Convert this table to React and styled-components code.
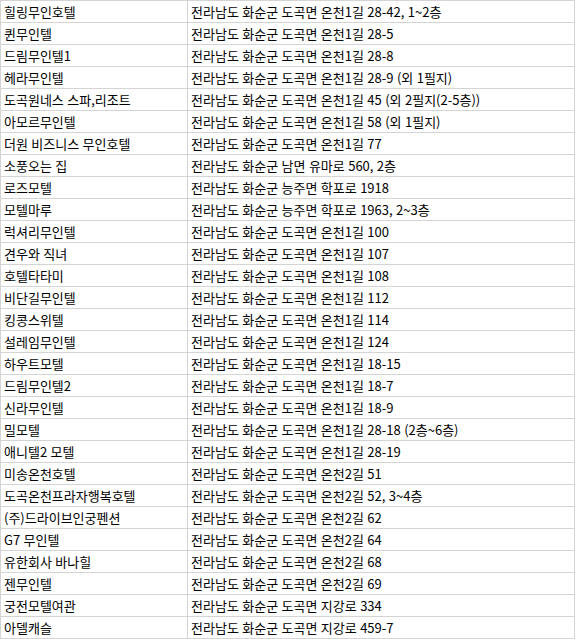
import React from "react";
import styled, { createGlobalStyle } from "styled-components";

const Global = createGlobalStyle`
  html, body { margin: 0; padding: 0; background: #fff; }
  body { font-family: "Malgun Gothic", "Noto Sans CJK KR", "Noto Sans", sans-serif; }
`;

const Table = styled.table`
  border-collapse: collapse;
  width: 575px;
  table-layout: fixed;
  font-size: 13px;
  color: #000;
`;

const Row = styled.tr`
  height: 22px;
`;

const Cell = styled.td`
  border: 1px solid #d4d4d4;
  padding: 0 0 0 3px;
  height: 21px;
  line-height: 20px;
  white-space: nowrap;
  overflow: hidden;
  vertical-align: middle;
  word-spacing: 0.5px;
  width: ${(p) => (p.$first ? "183px" : "auto")};
`;

const rows = [
  ["힐링무인호텔", "전라남도 화순군 도곡면 온천1길 28-42, 1~2층"],
  ["퀸무인텔", "전라남도 화순군 도곡면 온천1길 28-5"],
  ["드림무인텔1", "전라남도 화순군 도곡면 온천1길 28-8"],
  ["헤라무인텔", "전라남도 화순군 도곡면 온천1길 28-9 (외 1필지)"],
  ["도곡원네스 스파,리조트", "전라남도 화순군 도곡면 온천1길 45 (외 2필지(2-5층))"],
  ["아모르무인텔", "전라남도 화순군 도곡면 온천1길 58 (외 1필지)"],
  ["더원 비즈니스 무인호텔", "전라남도 화순군 도곡면 온천1길 77"],
  ["소풍오는 집", "전라남도 화순군 남면 유마로 560, 2층"],
  ["로즈모텔", "전라남도 화순군 능주면 학포로 1918"],
  ["모텔마루", "전라남도 화순군 능주면 학포로 1963, 2~3층"],
  ["럭셔리무인텔", "전라남도 화순군 도곡면 온천1길 100"],
  ["견우와 직녀", "전라남도 화순군 도곡면 온천1길 107"],
  ["호텔타타미", "전라남도 화순군 도곡면 온천1길 108"],
  ["비단길무인텔", "전라남도 화순군 도곡면 온천1길 112"],
  ["킹콩스위텔", "전라남도 화순군 도곡면 온천1길 114"],
  ["설레임무인텔", "전라남도 화순군 도곡면 온천1길 124"],
  ["하우트모텔", "전라남도 화순군 도곡면 온천1길 18-15"],
  ["드림무인텔2", "전라남도 화순군 도곡면 온천1길 18-7"],
  ["신라무인텔", "전라남도 화순군 도곡면 온천1길 18-9"],
  ["밀모텔", "전라남도 화순군 도곡면 온천1길 28-18 (2층~6층)"],
  ["애니텔2 모텔", "전라남도 화순군 도곡면 온천1길 28-19"],
  ["미송온천호텔", "전라남도 화순군 도곡면 온천2길 51"],
  ["도곡온천프라자행복호텔", "전라남도 화순군 도곡면 온천2길 52, 3~4층"],
  ["(주)드라이브인궁펜션", "전라남도 화순군 도곡면 온천2길 62"],
  ["G7 무인텔", "전라남도 화순군 도곡면 온천2길 64"],
  ["유한회사 바나힐", "전라남도 화순군 도곡면 온천2길 68"],
  ["젠무인텔", "전라남도 화순군 도곡면 온천2길 69"],
  ["궁전모텔여관", "전라남도 화순군 도곡면 지강로 334"],
  ["아델캐슬", "전라남도 화순군 도곡면 지강로 459-7"],
];

export default function App() {
  return (
    <>
      <Global />
      <Table>
        <tbody>
          {rows.map(([name, addr], i) => (
            <Row key={i}>
              <Cell $first>{name}</Cell>
              <Cell>{addr}</Cell>
            </Row>
          ))}
        </tbody>
      </Table>
    </>
  );
}
